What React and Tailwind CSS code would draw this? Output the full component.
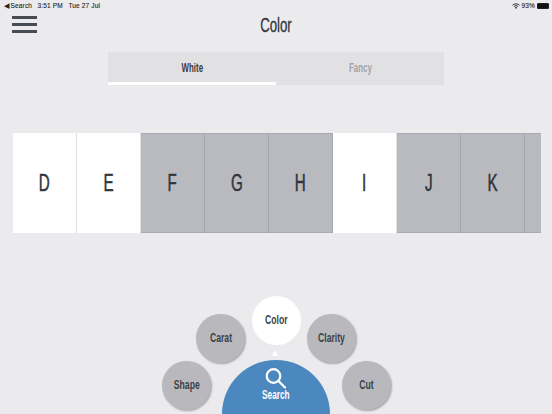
import React from "react";

const font = { fontFamily: '"Liberation Sans", sans-serif' };
const tiles = [
  ["D", true], ["E", true], ["F", false], ["G", false], ["H", false],
  ["I", true], ["J", false], ["K", false],
];

function Narrow({ children, cls = "scale-x-[0.66]" }) {
  return <span className={`inline-block ${cls}`}>{children}</span>;
}

function Bubble({ label, cls, white }) {
  return (
    <div className={`absolute w-[49px] h-[49px] rounded-full flex items-center justify-center text-[12.500px] font-bold text-[#3a3f47] ${white ? "bg-white" : "bg-[#b9b9bd] shadow-[1px_1px_2px_rgba(0,0,0,0.3)]"} ${cls}`}>
      <Narrow cls="scale-x-[0.69]">{label}</Narrow>
    </div>
  );
}

export default function App() {
  return (
    <div className="relative w-[552px] h-[414px] overflow-hidden bg-[#ebebed] text-[#30343b]" style={font}>
      <div className="flex items-center justify-between h-[11px] pl-[3.500px] pr-[3px] text-[6.500px] text-[#222] tracking-[0.15px] [-webkit-text-stroke:0.1px_#222]">
        <div className="flex items-center gap-[5.500px]">
          <span>◀ Search</span>
          <span>3:51 PM</span>
          <span>Tue 27 Jul</span>
        </div>
        <div className="flex items-center gap-[2px]">
          <svg width="8" height="6" viewBox="0 0 16 12" fill="none" stroke="#222" strokeWidth="1.800">
            <path d="M1 4.500a10 10 0 0 1 14 0" />
            <path d="M3.800 7a6 6 0 0 1 8.400 0" />
            <path d="M8 12 5.800 9.200a3 3 0 0 1 4.400 0z" fill="#222" stroke="none" />
          </svg>
          <span>93%</span>
          <div className="w-[12px] h-[6px] rounded-[1px] border-[0.5px] border-[#222] bg-[#111]" />
        </div>
      </div>

      <div className="relative h-[41px]">
        <div className="absolute left-[12px] top-[5px] w-[25px] flex flex-col gap-[4px]">
          <div className="h-[3px] bg-[#474b52]" />
          <div className="h-[3px] bg-[#474b52]" />
          <div className="h-[3px] bg-[#474b52]" />
        </div>
        <div className="pt-[2px] text-center text-[20px] leading-[24px] text-[#30343b] [-webkit-text-stroke:0.3px_#30343b]">
          <Narrow>Color</Narrow>
        </div>
      </div>

      <div className="ml-[108px] w-[336px] h-[33px] flex bg-[#e1e1e3] text-[12px] font-bold">
        <div className="flex-1 flex items-center justify-center pt-[1px] border-b-[3px] border-white text-[#3a3d44]"><Narrow>White</Narrow></div>
        <div className="flex-1 flex items-center justify-center pb-[2px] text-[#a3a3a8]"><Narrow>Fancy</Narrow></div>
      </div>

      <div className="mt-[48px] ml-[13px] w-[528px] h-[100px] flex overflow-hidden">
        {tiles.map(([t, w]) => (
          <div key={t} className={`w-[64px] shrink-0 flex items-center justify-center text-[23px] text-[#30343b] [-webkit-text-stroke:0.5px_#30343b] border-r ${w ? "bg-white border-r-[#e0e0e2]" : "bg-[#b9bac0] border-r-[#a6a7ac] border-t border-b border-t-[#a9aaaf] border-b-[#a9aaaf]"}`}>
            <Narrow>{t}</Narrow>
          </div>
        ))}
        <div className="w-[16px] shrink-0 bg-[#b9bac0] border-t border-b border-[#a9aaaf]" />
      </div>

      <Bubble label="Color" white cls="left-[251.500px] top-[295.500px]" />
      <Bubble label="Carat" cls="left-[196px] top-[313.500px]" />
      <Bubble label="Clarity" cls="left-[307px] top-[313.500px]" />
      <Bubble label="Shape" cls="left-[162px] top-[360.500px]" />
      <Bubble label="Cut" cls="left-[342px] top-[360.500px]" />

      <div className="absolute left-[272px] top-[350px] w-0 h-0 border-l-[3.500px] border-r-[3.500px] border-b-[6px] border-l-transparent border-r-transparent border-b-white" />

      <div className="absolute left-[222px] top-[360px] w-[108px] h-[108px] rounded-full bg-[#4b88bf] flex flex-col items-center text-white">
        <svg className="mt-[8px]" width="22" height="21" viewBox="0 0 22 21" fill="none" stroke="white" strokeWidth="2.200" strokeLinecap="round">
          <circle cx="8.500" cy="8" r="6.800" />
          <path d="M13.500 13 20 19.500" />
        </svg>
        <span className="mt-[-1px] text-[12.500px] leading-[15px] font-bold"><Narrow>Search</Narrow></span>
      </div>
    </div>
  );
}
